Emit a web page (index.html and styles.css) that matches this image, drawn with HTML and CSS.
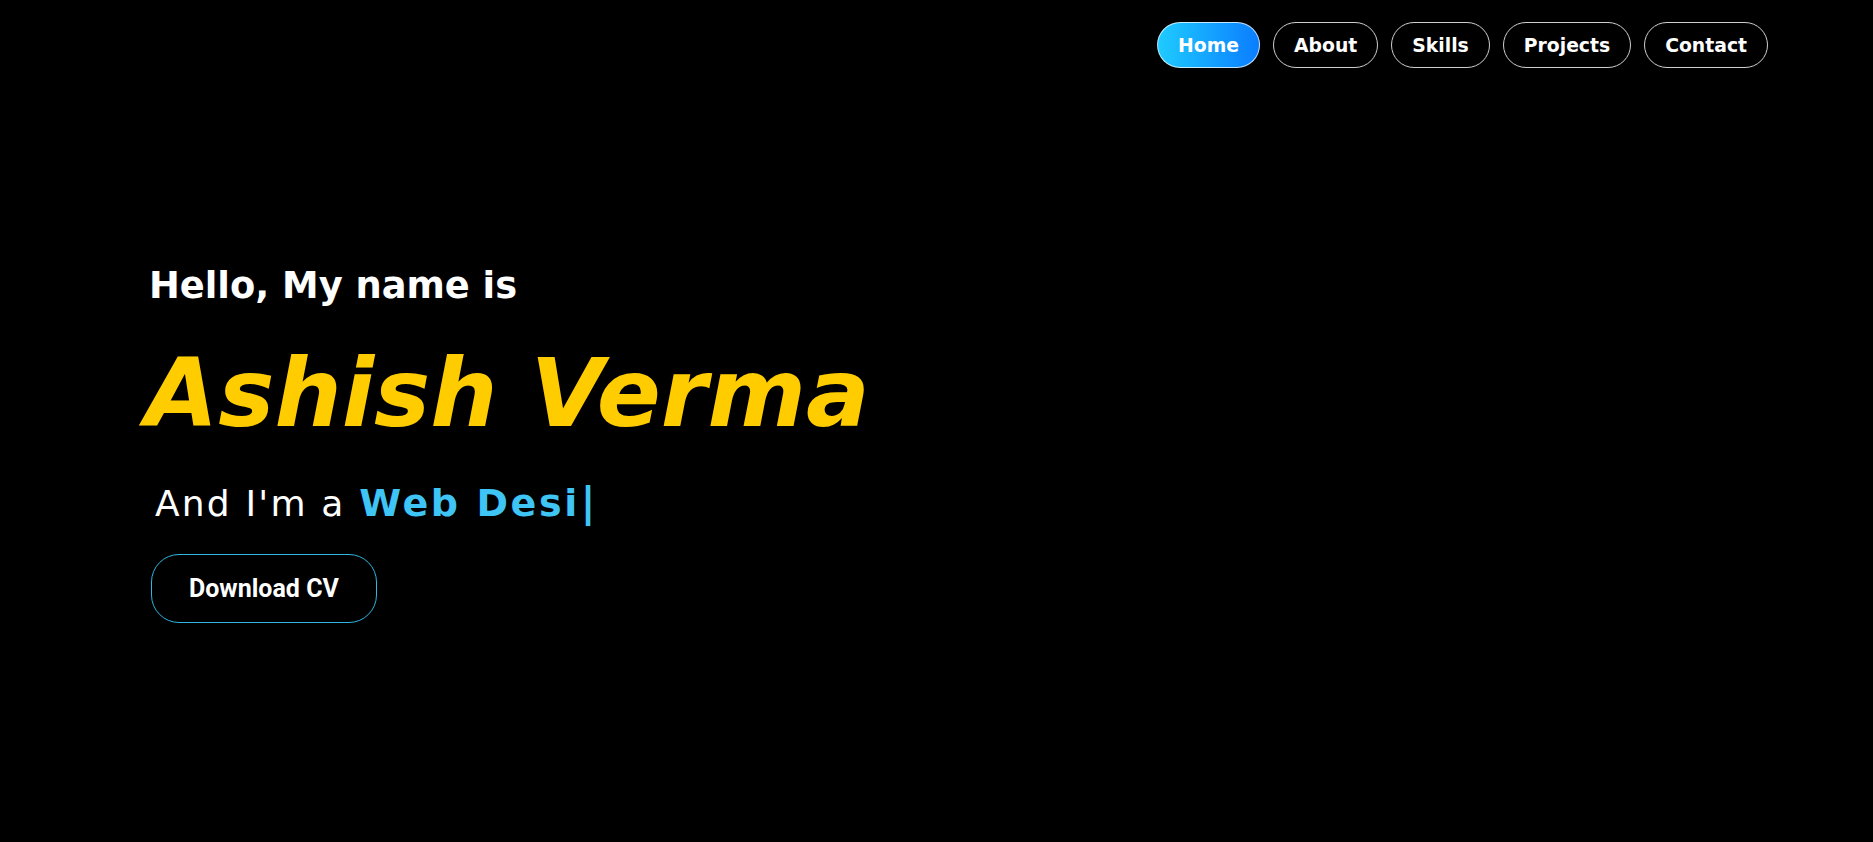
FILE: index.html
```html
<!DOCTYPE html>
<html lang="en">
<head>
<meta charset="utf-8">
<title>Ashish Verma</title>
<link rel="stylesheet" href="styles.css">
</head>
<body>
<header class="header">
  <nav class="nav">
    <a class="nav-link active" href="#">Home</a>
    <a class="nav-link" href="#">About</a>
    <a class="nav-link" href="#">Skills</a>
    <a class="nav-link" href="#">Projects</a>
    <a class="nav-link" href="#">Contact</a>
  </nav>
</header>
<main class="hero">
  <h3 class="hello">Hello, My name is</h3>
  <h1 class="name">Ashish Verma</h1>
  <h3 class="role">And I'm a <span class="typed">Web Desi</span><span class="cursor">|</span></h3>
  <a class="cv-btn" href="#">Download CV</a>
</main>
</body>
</html>
```
FILE: styles.css
```css
* { box-sizing: border-box; }
html, body { margin: 0; padding: 0; background: #000; }
body {
  width: 1873px;
  height: 842px;
  overflow: hidden;
  color: #fff;
  font-family: "DejaVu Sans", sans-serif;
}
.header {
  display: flex;
  justify-content: flex-end;
  padding: 22px 105px 0 0;
}
.nav {
  display: flex;
  gap: 13px;
}
.nav-link {
  display: flex;
  align-items: center;
  height: 46px;
  padding: 2px 20px 0;
  border: 1px solid #cfcfcf;
  border-radius: 30px;
  color: #fff;
  text-decoration: none;
  font-weight: bold;
  font-size: 18.8px;
  line-height: 20px;
}
.nav-link.active {
  background: linear-gradient(90deg, #1fcbff 0%, #0a7dff 100%);
  border-color: rgba(255,255,255,0.75);
}
.hero {
  display: flex;
  flex-direction: column;
  align-items: flex-start;
  padding: 196px 0 0 149px;
}
.hello {
  margin: 0;
  font-size: 36.8px;
  line-height: 1.2;
  font-weight: bold;
  color: #fff;
}
.name {
  margin: 29px 0 0 -4px;
  font-size: 94.5px;
  line-height: 1.2;
  font-weight: bold;
  font-style: italic;
  color: #ffcc00;
}
.role {
  margin: 30px 0 0 0;
  padding-left: 6px;
  font-size: 36px;
  line-height: 43px;
  font-weight: normal;
  letter-spacing: 2.2px;
  color: #fff;
}
.typed {
  font-weight: bold;
  font-size: 38px;
  color: #3fc4f6;
  letter-spacing: 2.6px;
}
.cursor {
  font-weight: bold;
  font-size: 40px;
  color: #3fc4f6;
  margin-left: 1px;
}
.cv-btn {
  margin: 29px 0 0 2px;
  padding: 19px 37px;
  border: 1px solid #2fb6e2;
  border-radius: 28px;
  font-family: Roboto, "Liberation Sans", sans-serif;
  font-weight: bold;
  font-size: 25px;
  line-height: 29px;
  color: #fff;
  text-decoration: none;
}
```
